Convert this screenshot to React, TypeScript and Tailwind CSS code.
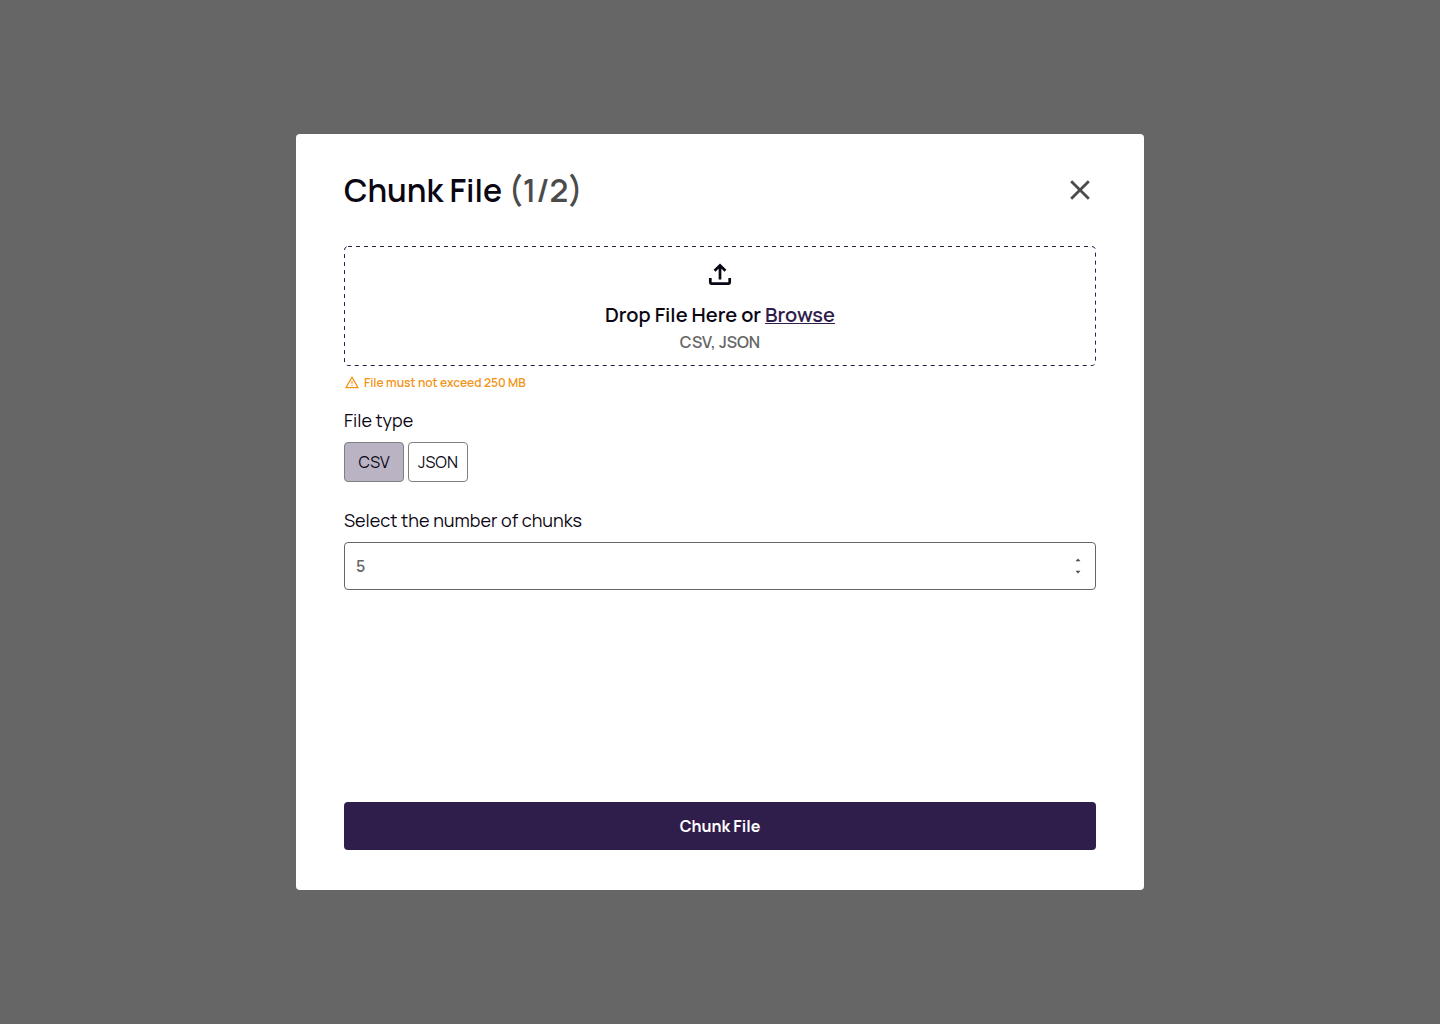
import { useState } from 'react';

const FILE_TYPES = ['CSV', 'JSON'];

function CloseIcon() {
  return (
    <svg className="size-8" viewBox="0 0 32 32" fill="none" stroke="#4b4b4b" strokeWidth="2.8" aria-hidden="true">
      <path d="M7.2 7.2 24.8 24.8M24.8 7.2 7.2 24.8" />
    </svg>
  );
}

function UploadIcon() {
  return (
    <svg className="size-8" viewBox="0 0 32 32" fill="none" stroke="#0b0613" strokeWidth="2.7" aria-hidden="true">
      <path d="M16 21.4V8M10.6 12.8 16 7.4l5.4 5.4" />
      <path d="M6.3 20v4.6a1 1 0 0 0 1 1h17.4a1 1 0 0 0 1-1V20" />
    </svg>
  );
}

function WarningIcon() {
  return (
    <svg className="size-4" viewBox="0 0 16 16" fill="#f39314" aria-hidden="true">
      <path fillRule="evenodd" d="M8 .9 15.1 13.2H.9L8 .9Zm0 2.6L3.1 12h9.8L8 3.5Z" />
      <path d="M7.4 6h1.2v2.8H7.4zM7.4 9.8h1.2V11H7.4z" />
    </svg>
  );
}

export default function App() {
  const [fileType, setFileType] = useState('CSV');
  const [chunks, setChunks] = useState(5);

  return (
    <div className="flex min-h-screen items-center justify-center bg-[#666666] p-6 font-['Manrope','Inter',sans-serif] text-[#0b0613]">
      <main role="dialog" aria-labelledby="title" className="flex min-h-[756px] w-full max-w-[848px] flex-col rounded bg-white px-12 py-10">
        <header className="flex h-8 items-center justify-between">
          <h1 id="title" className="text-[32px] leading-8 font-semibold">
            Chunk File <span className="text-[#4b4b4b]">(1/2)</span>
          </h1>
          <button type="button" aria-label="Close">
            <CloseIcon />
          </button>
        </header>

        <section aria-label="File upload" className="relative mt-10 flex h-[120px] flex-col items-center pt-3">
          <svg className="absolute inset-0 size-full overflow-visible p-[0.5px]" aria-hidden="true">
            <rect width="100%" height="100%" rx="3.5" fill="none" stroke="#2f1d4c" strokeDasharray="4 4" />
          </svg>
          <UploadIcon />
          <p className="relative mt-3 text-xl leading-[26px] font-semibold">
            Drop File Here or{' '}
            <a href="#browse" className="text-[#2f1d4c] underline decoration-1 underline-offset-1">Browse</a>
          </p>
          <p className="mt-0.5 text-base leading-6 font-semibold text-[#666666]">CSV, JSON</p>
        </section>

        <p className="mt-2 flex items-center gap-1 text-xs leading-[18px] font-semibold text-[#f39314]">
          <WarningIcon />
          File must not exceed 250 MB
        </p>

        <fieldset className="mt-3.5">
          <legend className="text-lg leading-7">File type</legend>
          <div className="mt-2 flex gap-1">
            {FILE_TYPES.map((type) => (
              <button
                key={type}
                type="button"
                aria-pressed={fileType === type}
                onClick={() => setFileType(type)}
                className={
                  fileType === type
                    ? 'h-10 w-[60px] rounded border border-[#808080] bg-[#bab3c4] text-base'
                    : 'h-10 w-[60px] rounded border border-[#808080] bg-white text-base'
                }
              >
                {type}
              </button>
            ))}
          </div>
        </fieldset>

        <label htmlFor="chunks" className="mt-6 text-lg leading-7">Select the number of chunks</label>
        <div className="mt-2 flex h-12 items-center rounded border border-[#666666] px-[11px]">
          <input
            id="chunks"
            type="text"
            inputMode="numeric"
            value={chunks}
            onChange={(e) => setChunks(Number(e.target.value) || 1)}
            className="min-w-0 flex-1 text-base font-semibold text-[#666666] outline-none"
          />
          <div className="flex flex-col">
            <button type="button" aria-label="Increase" onClick={() => setChunks(chunks + 1)} className="flex h-3 w-3 items-center justify-center">
              <svg className="h-1 w-2" viewBox="0 0 8 4" fill="#4b4b4b" aria-hidden="true"><path d="m4 .6 2.5 2.6h-5z" /></svg>
            </button>
            <button type="button" aria-label="Decrease" onClick={() => setChunks(Math.max(1, chunks - 1))} className="flex h-3 w-3 items-center justify-center">
              <svg className="h-1 w-2" viewBox="0 0 8 4" fill="#4b4b4b" aria-hidden="true"><path d="M4 3.4 1.5.8h5z" /></svg>
            </button>
          </div>
        </div>

        <button type="button" className="mt-auto h-12 rounded bg-[#2f1d4c] text-base font-bold text-white">
          Chunk File
        </button>
      </main>
    </div>
  );
}
